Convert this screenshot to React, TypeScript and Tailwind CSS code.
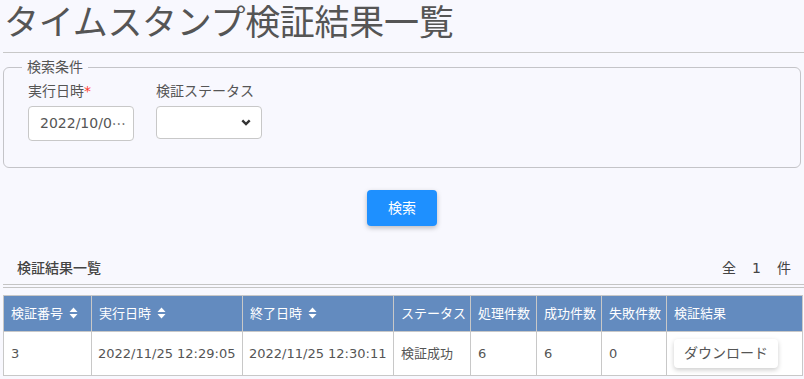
import React from 'react';

const font = { fontFamily: '"DejaVu Sans", "Noto Sans CJK JP", sans-serif' };
const cjk = { fontFamily: '"Noto Sans CJK JP", sans-serif' };

function SortIcon() {
  return (
    <svg width="9" height="12" viewBox="0 0 9 12" className="ml-[6px] inline-block align-[-1px]">
      <path d="M4.5 0.5 L8.5 5 H0.5 Z" fill="white" />
      <path d="M4.5 11.5 L8.5 7 H0.5 Z" fill="white" />
    </svg>
  );
}

const cols = [
  { label: '検証番号', w: 'w-[88px]', sort: true },
  { label: '実行日時', w: 'w-[151px]', sort: true },
  { label: '終了日時', w: 'w-[151px]', sort: true },
  { label: 'ステータス', w: 'w-[77px]', sort: false },
  { label: '処理件数', w: 'w-[66px]', sort: false },
  { label: '成功件数', w: 'w-[65px]', sort: false },
  { label: '失敗件数', w: 'w-[65px]', sort: false },
  { label: '検証結果', w: 'w-[136px]', sort: false },
];

export default function App() {
  return (
    <div style={font} className="min-h-[379px] w-[804px] overflow-hidden bg-[#f8f8fe] pl-[3px] text-[#555]">
      {/* Title */}
      <h1 className="h-[53px] border-b border-[#c8c8c8] pl-[1px] text-[35px] leading-[46px] font-normal tracking-[-0.3px] text-[#555]">
        タイムスタンプ検証結果一覧
      </h1>

      {/* Search conditions */}
      <fieldset className="mt-[4px] mr-[3px] h-[111px] rounded-[6px] border border-[#c4c4c8] px-[24px]">
        <legend className="ml-[-6px] px-[5px] text-[14px] leading-[20px] text-[#555]">検索条件</legend>
        <div className="mt-[4px] flex gap-[22px]">
          <div className="flex flex-col">
            <label className="text-[14px] leading-[20px] text-[#555]">
              実行日時<span className="text-[#ff3b30]">*</span>
            </label>
            <div className="mt-[5px] flex h-[35px] w-[106px] items-center overflow-hidden rounded-[4px] border border-[#c8c8c8] bg-white pl-[11px] text-[14px] whitespace-nowrap text-[#555]">
              2022/10/0<span style={cjk}>…</span>
            </div>
          </div>
          <div className="flex flex-col">
            <label className="text-[14px] leading-[20px] text-[#555]">検証ステータス</label>
            <div className="mt-[5px] flex h-[33px] w-[106px] items-center justify-end rounded-[4px] border border-[#c8c8c8] bg-white pr-[10px]">
              <svg width="10" height="7" viewBox="0 0 10 7">
                <path d="M1.3 1.3 L5 5 L8.7 1.3" stroke="#333" strokeWidth="2.4" fill="none" />
              </svg>
            </div>
          </div>
        </div>
      </fieldset>

      {/* Search button */}
      <div className="mt-[22px] flex justify-center pr-[3px]">
        <button className="h-[36px] w-[70px] rounded-[4px] bg-[#1e90ff] text-[14px] text-white shadow-[0_2px_5px_rgba(0,0,0,0.25)]">
          検索
        </button>
      </div>

      {/* Result header */}
      <div className="mt-[32px] flex items-center justify-between pl-[14px] pr-[13px] text-[14px] leading-[20px]">
        <span className="font-medium text-[#444]">検証結果一覧</span>
        <span className="text-[#444]">
          全<span className="mx-[16px]">1</span>件
        </span>
      </div>
      <div className="mt-[6px] h-[4px] border-y border-[#c4c4c4]" />

      {/* Table */}
      <table className="mt-[7px] w-[799px] table-fixed border-collapse text-[13px]">
        <thead>
          <tr className="h-[36px] bg-[#638bbf] text-white">
            {cols.map((c) => (
              <th
                key={c.label}
                className={`${c.w} border border-[#c8c8c8] px-[7px] text-left font-normal whitespace-nowrap`}
              >
                {c.label}
                {c.sort && <SortIcon />}
              </th>
            ))}
          </tr>
        </thead>
        <tbody>
          <tr className="h-[44px] bg-white text-[#555]">
            <td className="border border-[#c8c8c8] px-[7px]">3</td>
            <td className="border border-[#c8c8c8] px-[6px] whitespace-nowrap">2022/11/25 12:29:05</td>
            <td className="border border-[#c8c8c8] px-[6px] whitespace-nowrap">2022/11/25 12:30:11</td>
            <td className="border border-[#c8c8c8] px-[7px]">検証成功</td>
            <td className="border border-[#c8c8c8] px-[7px]">6</td>
            <td className="border border-[#c8c8c8] px-[7px]">6</td>
            <td className="border border-[#c8c8c8] px-[7px]">0</td>
            <td className="border border-[#c8c8c8] px-[7px]">
              <button className="h-[29px] w-[104px] rounded-[4px] bg-white text-[14px] text-[#555] shadow-[0_2px_5px_rgba(0,0,0,0.2)]">
                ダウンロード
              </button>
            </td>
          </tr>
        </tbody>
      </table>
    </div>
  );
}
